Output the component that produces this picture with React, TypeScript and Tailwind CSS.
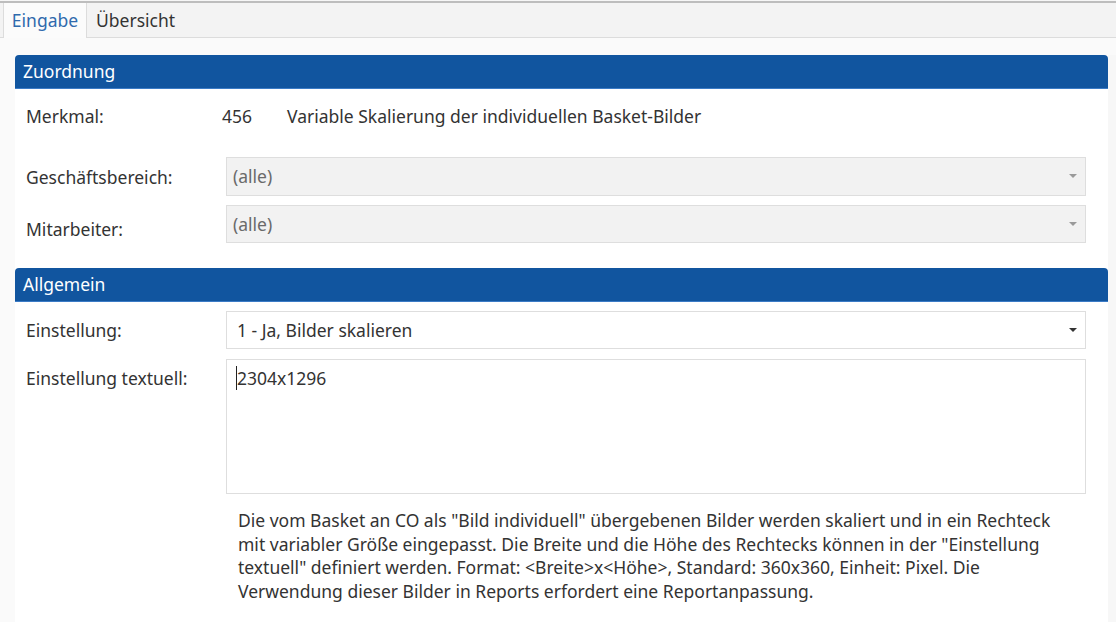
import React from "react";

const font = { fontFamily: '"Segoe UI", "Noto Sans", "Open Sans", sans-serif' };

function Arrow({ dark }: { dark?: boolean }) {
  return (
    <svg width="8" height="5" viewBox="0 0 8 5" className="shrink-0">
      <path d="M0 0 L8 0 L4 4 Z" fill={dark ? "#333" : "#9a9a9a"} />
    </svg>
  );
}

function SectionHeader({ title }: { title: string }) {
  return (
    <div className="h-[34px] bg-[#11559f] rounded-t-[4px] flex items-center pl-[8px] text-white text-[17.5px] border-b border-[#3b7bc6]">
      {title}
    </div>
  );
}

const lines = [
  'Die vom Basket an CO als "Bild individuell" übergebenen Bilder werden skaliert und in ein Rechteck',
  'mit variabler Größe eingepasst. Die Breite und die Höhe des Rechtecks können in der "Einstellung',
  'textuell" definiert werden. Format: <Breite>x<Höhe>, Standard: 360x360, Einheit: Pixel. Die',
  "Verwendung dieser Bilder in Reports erfordert eine Reportanpassung.",
];

export default function App() {
  return (
    <div className="w-[1116px] h-[622px] bg-[#fafafa] text-[#333] overflow-hidden flex flex-col" style={font}>
      <div className="h-[3px] bg-[#f6f6f6] border-b-[2px] border-[#bdbdbd]" />
      <div className="h-[35px] bg-[#f3f3f3] border-b border-[#dcdcdc] flex items-end pl-[3px]">
        <div className="h-[35px] w-[84px] bg-[#fbfbfb] border-x border-[#dcdcdc] flex items-center justify-center text-[17.5px] text-[#2f6aad] -mb-px">
          Eingabe
        </div>
        <div className="h-[34px] px-[9px] flex items-center text-[17.5px] text-[#333]">Übersicht</div>
      </div>
      <div className="flex flex-1 pt-[17px]">
        <div className="ml-[15px] w-[1093px] bg-white">
          <SectionHeader title="Zuordnung" />
          <div className="pl-[11px] pr-[22px] pt-[10px] pb-[25px] text-[17.5px]">
            <div className="flex items-center h-[34px]">
              <div className="w-[196px]">Merkmal:</div>
              <div className="w-[65px]">456</div>
              <div>Variable Skalierung der individuellen Basket-Bilder</div>
            </div>
            <div className="flex items-center h-[39px] mt-[24px]">
              <div className="w-[200px] pt-[2px]">Geschäftsbereich:</div>
              <div className="flex-1 h-[39px] bg-[#f2f2f2] border border-[#dedede] flex items-center justify-between pl-[6px] pr-[8px] text-[#6a6a6a]">
                <span>(alle)</span>
                <Arrow />
              </div>
            </div>
            <div className="flex items-end h-[38px] mt-[9px]">
              <div className="w-[200px] pb-[1px]">Mitarbeiter:</div>
              <div className="flex-1 h-[38px] bg-[#f2f2f2] border border-[#dedede] flex items-center justify-between pl-[6px] pr-[8px] text-[#6a6a6a]">
                <span>(alle)</span>
                <Arrow />
              </div>
            </div>
          </div>
          <SectionHeader title="Allgemein" />
          <div className="pl-[11px] pr-[22px] pt-[9px] text-[17.5px]">
            <div className="flex items-center h-[38px]">
              <div className="w-[200px]">Einstellung:</div>
              <div className="flex-1 h-[38px] bg-white border border-[#dedede] flex items-center justify-between pl-[10px] pr-[8px]">
                <span>1 - Ja, Bilder skalieren</span>
                <Arrow dark />
              </div>
            </div>
            <div className="flex items-start mt-[10px]">
              <div className="w-[200px] pt-[6px]">Einstellung textuell:</div>
              <div className="flex-1 h-[135px] bg-white border border-[#dedede] pl-[10px] pt-[5px]">
                <span className="border-l border-[#222] -ml-px">2304x1296</span>
              </div>
            </div>
            <div className="ml-[212px] mt-[15px] text-[17.5px] leading-[23.5px]">
              {lines.map((l) => (
                <div key={l} className="whitespace-nowrap">{l}</div>
              ))}
            </div>
          </div>
        </div>
        <div className="flex-1 bg-[#f7f7f7]" />
      </div>
    </div>
  );
}
